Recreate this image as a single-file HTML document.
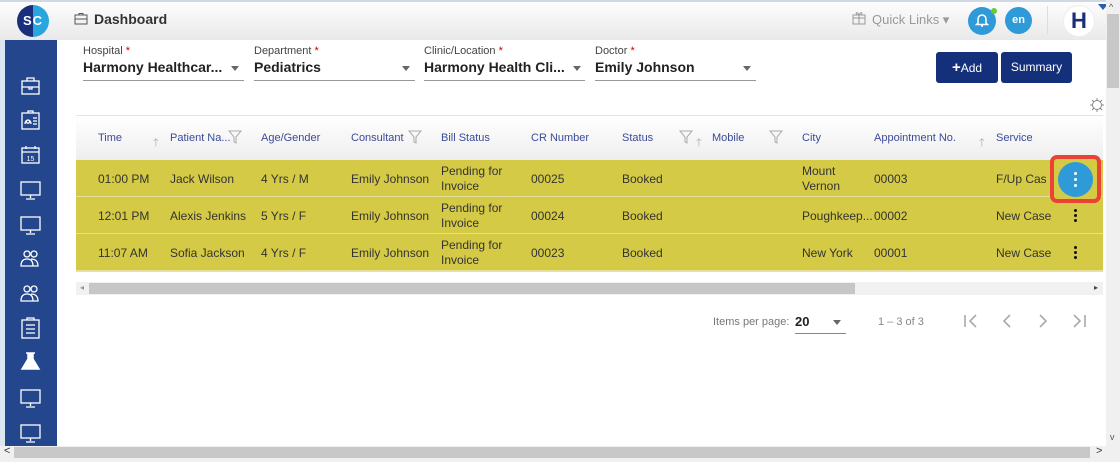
<!DOCTYPE html><html><head><style>
*{margin:0;padding:0;box-sizing:border-box}
body{width:1120px;height:462px;overflow:hidden;background:#fff;font-family:"Liberation Sans",sans-serif;position:relative;color:#333}
.a{position:absolute}
.top{left:0;top:0;width:1106px;height:40px;background:linear-gradient(#fdfdfd,#e9e9e9);border-top:2px solid #cfd8e3}
.side{left:5px;top:40px;width:52px;height:406px;background:#23468c}
.strip{left:0;top:0;width:5px;height:446px;background:#dbe6f2}
.lbl{font-size:11px;color:#444}
.lbl i{color:#c00;font-style:normal}
.val{font-size:14px;font-weight:bold;color:#222}
.ul{height:1px;background:#999}
.caret{width:0;height:0;border-left:4px solid transparent;border-right:4px solid transparent;border-top:5px solid #666}
.btn{background:#14307a;color:#fff;font-size:12px;border-radius:3px;text-align:center;line-height:31px;height:31px;top:52px}
.th{font-size:11px;color:#3b4a9a;top:132px}
.row{left:76px;width:1027px;height:37px;background:#d5ca45;border-bottom:1px solid #e6df9a}
.td{font-size:12px;color:#333}
.ic{stroke:#fff;fill:none;stroke-width:1.3}
.dots{width:3px;height:3px;border-radius:50%;background:#111;position:absolute}
</style></head><body>
<div class="a strip"></div>
<div class="a top"></div>
<div class="a" style="left:17px;top:5px;width:32px;height:32px;border-radius:50%;background:linear-gradient(90deg,#1a2f7c 50%,#29a6e0 50%);color:#fff;font-weight:bold;font-size:13px;line-height:32px;text-align:center;letter-spacing:1px">SC</div>
<svg class="a" style="left:74px;top:13px" width="14" height="12"><rect x="1" y="2" width="12" height="9" fill="none" stroke="#555"/><path d="M5 2V0.5h4V2M1 6h12" stroke="#555" fill="none"/></svg>
<div class="a" style="left:94px;top:11px;font-size:14px;font-weight:bold;color:#333">Dashboard</div>
<svg class="a" style="left:852px;top:11px" width="14" height="14"><rect x="1" y="4" width="12" height="9" fill="none" stroke="#999"/><path d="M1 7h12M7 4v9M7 4C5 0 3 2 5 4M7 4c2-4 4-2 2 0" fill="none" stroke="#999"/></svg>
<div class="a" style="left:872px;top:12px;font-size:13px;color:#999">Quick Links ▾</div>
<div class="a" style="left:968px;top:7px;width:28px;height:28px;border-radius:50%;background:#2e9ad8"></div>
<div class="a" style="left:991px;top:8px;width:6px;height:6px;border-radius:50%;background:#6c3"></div>
<svg class="a" style="left:975px;top:13px" width="14" height="15"><path d="M3 10V6a4 4 0 0 1 8 0v4l1.5 1.5h-11z M6 13h2" fill="none" stroke="#fff" stroke-width="1.5"/></svg>
<div class="a" style="left:1005px;top:7px;width:27px;height:27px;border-radius:50%;background:#2e9ad8;color:#fff;font-size:11px;font-weight:bold;line-height:27px;text-align:center">en</div>
<div class="a" style="left:1047px;top:6px;width:1px;height:28px;background:#ddd"></div>
<div class="a" style="left:1063px;top:5px;width:32px;height:32px;border-radius:50%;background:#fff;border:1px solid #eee;color:#1a2f7c;font-size:22px;font-weight:bold;line-height:30px;text-align:center">H</div>
<div class="a" style="left:1098px;top:4px;width:0;height:0;border-left:5px solid transparent;border-right:5px solid transparent;border-top:6px solid #2a5ea8"></div>
<div class="a" style="left:1106px;top:0;width:14px;height:446px;background:#f0f0f0"></div>
<div class="a" style="left:1107px;top:14px;width:12px;height:74px;background:#c8c8c8"></div>
<div class="a" style="left:1109px;top:2px;font-size:9px;color:#555">^</div>
<div class="a" style="left:1110px;top:432px;font-size:9px;color:#555">v</div>
<div class="a" style="left:0;top:446px;width:1120px;height:16px;background:#f0f0f0"></div>
<div class="a" style="left:14px;top:447px;width:1076px;height:11px;background:#c8c8c8"></div>
<div class="a" style="left:4px;top:445px;font-size:11px;color:#333">&lt;</div>
<div class="a" style="left:1096px;top:445px;font-size:11px;color:#333">&gt;</div>
<div class="a side"></div>
<svg class="a" style="left:5px;top:40px" width="52" height="406">
<g class="ic"><rect x="17" y="41" width="17" height="13"/><path d="M22 41v-3h7v3M17 47h17M24 47v2h3v-2"/></g>
<g class="ic"><rect x="17" y="73" width="17" height="16"/><path d="M23 73v-2h5v2M20 84c0-3 2-4 3-4s3 1 3 4M23 80a1.6 1.6 0 1 0 .1 0M28 78h4M28 81h4M28 84h4"/></g>
<g class="ic"><rect x="17" y="108" width="17" height="15"/><path d="M17 112h17M21 106v3M30 106v3"/></g>
<text x="25.5" y="121" fill="#fff" font-size="7" text-anchor="middle" font-family="Liberation Sans">15</text>
<g class="ic"><rect x="16" y="142" width="19" height="13"/><path d="M25.5 155v3M21 159h9"/></g>
<g class="ic"><rect x="16" y="177" width="19" height="13"/><path d="M25.5 190v3M21 194h9"/></g>
<g class="ic"><circle cx="22" cy="214" r="3"/><circle cx="29" cy="214" r="3"/><path d="M16 226c0-5 2-7 6-7s6 2 6 7zM26 219c4 0 7 2 7 7h-5"/></g>
<g class="ic"><circle cx="22" cy="249" r="3"/><circle cx="29" cy="249" r="3"/><path d="M16 261c0-5 2-7 6-7s6 2 6 7zM26 254c4 0 7 2 7 7h-5"/></g>
<g class="ic"><rect x="17" y="280" width="17" height="18"/><path d="M22 280v-2h7v2M21 285h9M21 289h9M21 293h9"/></g>
<path d="M21 313h9M23 313v6l-6 10h17l-6-10v-6" fill="#fff" stroke="#fff" stroke-width="1.5"/>
<g class="ic"><rect x="16" y="350" width="19" height="13"/><path d="M25.5 363v3M21 367h9"/></g>
<g class="ic"><rect x="16" y="385" width="19" height="13"/><path d="M25.5 398v3M21 402h9"/></g>
</svg>

<div class="a lbl" style="left:83px;top:45px">Hospital <i>*</i></div>
<div class="a val" style="left:83px;top:59px">Harmony Healthcar...</div>
<div class="a caret" style="left:231px;top:66px"></div>
<div class="a ul" style="left:83px;top:80px;width:161px"></div>
<div class="a lbl" style="left:254px;top:45px">Department <i>*</i></div>
<div class="a val" style="left:254px;top:59px">Pediatrics</div>
<div class="a caret" style="left:402px;top:66px"></div>
<div class="a ul" style="left:254px;top:80px;width:161px"></div>
<div class="a lbl" style="left:424px;top:45px">Clinic/Location <i>*</i></div>
<div class="a val" style="left:424px;top:59px">Harmony Health Cli...</div>
<div class="a caret" style="left:573px;top:66px"></div>
<div class="a ul" style="left:424px;top:80px;width:161px"></div>
<div class="a lbl" style="left:595px;top:45px">Doctor <i>*</i></div>
<div class="a val" style="left:595px;top:59px">Emily Johnson</div>
<div class="a caret" style="left:743px;top:66px"></div>
<div class="a ul" style="left:595px;top:80px;width:161px"></div>
<div class="a btn" style="left:936px;width:62px"><b style="font-size:15px">+</b>Add</div>
<div class="a btn" style="left:1001px;width:71px">Summary</div>
<svg class="a" style="left:1089px;top:97px" width="16" height="16"><circle cx="8" cy="8" r="4.5" fill="none" stroke="#888"/><path d="M8 1v3M8 12v3M1 8h3M12 8h3M3 3l2 2M11 11l2 2M3 13l2-2M11 5l2-2" stroke="#888"/></svg>

<div class="a" style="left:76px;top:115px;width:1027px;height:45px;background:linear-gradient(#fff,#eee);border-top:1px solid #e4e4e4"></div>
<div class="a th" style="left:98px">Time</div>
<div class="a th" style="left:153px;color:#aaa;top:134px">🡑</div>
<div class="a th" style="left:170px">Patient Na...</div>
<div class="a th" style="left:261px">Age/Gender</div>
<div class="a th" style="left:351px">Consultant</div>
<div class="a th" style="left:441px">Bill Status</div>
<div class="a th" style="left:531px">CR Number</div>
<div class="a th" style="left:622px">Status</div>
<div class="a th" style="left:712px">Mobile</div>
<div class="a th" style="left:802px">City</div>
<div class="a th" style="left:874px">Appointment No.</div>
<div class="a th" style="left:979px;color:#aaa;top:134px">🡑</div>
<div class="a th" style="left:996px">Service</div>
<div class="a th" style="left:696px;color:#aaa;top:134px">🡑</div>
<svg class="a" style="left:0;top:130px" width="1000" height="14"><g fill="none" stroke="#aaa"><path d="M229 1h12l-5 6v6l-2-1v-5z"/><path d="M409 1h12l-5 6v6l-2-1v-5z"/><path d="M680 1h12l-5 6v6l-2-1v-5z"/><path d="M770 1h12l-5 6v6l-2-1v-5z"/></g></svg>

<div class="a row" style="top:160px"></div>
<div class="a row" style="top:197px"></div>
<div class="a row" style="top:234px"></div>
<div class="a" style="left:76px;top:271px;width:1027px;height:1px;background:#ddd"></div>

<div class="a td" style="left:98px;top:172px">01:00 PM</div><div class="a td" style="left:170px;top:172px">Jack Wilson</div><div class="a td" style="left:261px;top:172px">4 Yrs / M</div><div class="a td" style="left:351px;top:172px">Emily Johnson</div><div class="a td" style="left:441px;top:164px;line-height:15px">Pending for<br>Invoice</div><div class="a td" style="left:531px;top:172px">00025</div><div class="a td" style="left:622px;top:172px">Booked</div><div class="a td" style="left:802px;top:164px;line-height:15px">Mount<br>Vernon</div><div class="a td" style="left:874px;top:172px">00003</div><div class="a td" style="left:996px;top:172px;width:50px;overflow:hidden;white-space:nowrap">F/Up Case</div>
<div class="a td" style="left:98px;top:209px">12:01 PM</div><div class="a td" style="left:170px;top:209px">Alexis Jenkins</div><div class="a td" style="left:261px;top:209px">5 Yrs / F</div><div class="a td" style="left:351px;top:209px">Emily Johnson</div><div class="a td" style="left:441px;top:201px;line-height:15px">Pending for<br>Invoice</div><div class="a td" style="left:531px;top:209px">00024</div><div class="a td" style="left:622px;top:209px">Booked</div><div class="a td" style="left:802px;top:209px">Poughkeep...</div><div class="a td" style="left:874px;top:209px">00002</div><div class="a td" style="left:996px;top:209px">New Case</div>
<div class="a td" style="left:98px;top:246px">11:07 AM</div><div class="a td" style="left:170px;top:246px">Sofia Jackson</div><div class="a td" style="left:261px;top:246px">4 Yrs / F</div><div class="a td" style="left:351px;top:246px">Emily Johnson</div><div class="a td" style="left:441px;top:238px;line-height:15px">Pending for<br>Invoice</div><div class="a td" style="left:531px;top:246px">00023</div><div class="a td" style="left:622px;top:246px">Booked</div><div class="a td" style="left:802px;top:246px">New York</div><div class="a td" style="left:874px;top:246px">00001</div><div class="a td" style="left:996px;top:246px">New Case</div>

<div class="a" style="left:1050px;top:155px;width:51px;height:48px;border:4px solid #ea4235;border-radius:7px;background:#d5ca45"></div>
<div class="a" style="left:1058px;top:162px;width:35px;height:35px;border-radius:50%;background:#2e9ad8"></div>
<div class="dots" style="left:1074px;top:172px;background:#fff"></div><div class="dots" style="left:1074px;top:178px;background:#fff"></div><div class="dots" style="left:1074px;top:184px;background:#fff"></div>
<div class="dots" style="left:1074px;top:209px"></div><div class="dots" style="left:1074px;top:214px"></div><div class="dots" style="left:1074px;top:219px"></div>
<div class="dots" style="left:1074px;top:246px"></div><div class="dots" style="left:1074px;top:251px"></div><div class="dots" style="left:1074px;top:256px"></div>

<div class="a" style="left:76px;top:282px;width:1027px;height:13px;background:#f1f1f1"></div>
<div class="a" style="left:89px;top:283px;width:766px;height:11px;background:#c6c6c6"></div>
<div class="a" style="left:80px;top:283px;font-size:8px;color:#999">◂</div>
<div class="a" style="left:1094px;top:283px;font-size:8px;color:#444">▸</div>

<div class="a" style="left:713px;top:316px;font-size:11px;color:#777">Items per page:</div>
<div class="a" style="left:795px;top:314px;font-size:13px;font-weight:bold;color:#222">20</div>
<div class="a caret" style="left:833px;top:320px"></div>
<div class="a" style="left:795px;top:333px;width:51px;height:1px;background:#888"></div>
<div class="a" style="left:878px;top:316px;font-size:11px;color:#888">1 – 3 of 3</div>
<svg class="a" style="left:960px;top:312px" width="130" height="18" fill="none" stroke="#aaa" stroke-width="1.6"><path d="M5 3v12M16 3l-6 6 6 6M50 3l-6 6 6 6M80 3l6 6-6 6M114 3l6 6-6 6M125 3v12"/></svg>
</body></html>
